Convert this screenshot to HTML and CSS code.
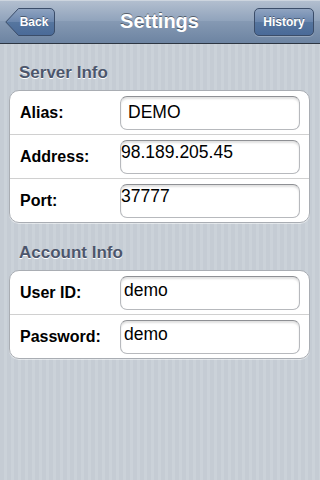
FILE: index.html
```html
<!DOCTYPE html>
<html lang="en">
<head>
  <meta charset="UTF-8">
  <title>Settings</title>
  <link rel="stylesheet" href="styles.css">
</head>
<body>
  <div class="navbar">
    <button class="nav-btn back-btn">
      <svg class="back-shape" width="50" height="28" viewBox="0 0 50 28">
        <defs>
          <linearGradient id="btnGrad" x1="0" y1="0" x2="0" y2="1">
            <stop offset="0" stop-color="#90a4c1"/>
            <stop offset="0.5" stop-color="#6a86ad"/>
            <stop offset="0.5" stop-color="#56769f"/>
            <stop offset="1" stop-color="#4a6a98"/>
          </linearGradient>
        </defs>
        <path d="M13.5 0.5 H45 A4.5 4.5 0 0 1 49.5 5 V23 A4.5 4.5 0 0 1 45 27.5 H13.5 L0.8 14 Z"
              fill="url(#btnGrad)" stroke="#3b4d69" stroke-width="1"/>
      </svg>
      <span class="btn-label">Back</span>
    </button>
    <h1 class="nav-title">Settings</h1>
    <button class="nav-btn history-btn">History</button>
  </div>

  <h2 class="section-title">Server Info</h2>
  <div class="group">
    <div class="row">
      <label for="alias">Alias:</label>
      <input type="text" id="alias" class="field field-alias" value="DEMO">
    </div>
    <div class="row">
      <label for="address">Address:</label>
      <input type="text" id="address" class="field field-top" value="98.189.205.45">
    </div>
    <div class="row">
      <label for="port">Port:</label>
      <input type="text" id="port" class="field field-top" value="37777">
    </div>
  </div>

  <h2 class="section-title">Account Info</h2>
  <div class="group">
    <div class="row">
      <label for="userId">User ID:</label>
      <input type="text" id="userId" class="field field-user" value="demo">
    </div>
    <div class="row">
      <label for="password">Password:</label>
      <input type="text" id="password" class="field field-user" value="demo">
    </div>
  </div>
</body>
</html>
```

FILE: styles.css
```css
html, body {
  height: 100%;
  margin: 0;
}
body {
  font-family: "Liberation Sans", Arial, sans-serif;
  background: repeating-linear-gradient(90deg, #c5ccd4 0, #c5ccd4 4px, #cbd2d9 4px, #cbd2d9 7px);
}
.navbar {
  height: 43px;
  border-bottom: 1px solid #2d3642;
  background: linear-gradient(#b4c0d0, #8fa2bb 50%, #8599b3 50%, #6d84a2);
  box-shadow: inset 0 1px 0 #cdd5df;
  display: grid;
  grid-template-columns: 1fr auto 1fr;
  align-items: center;
  padding: 0 6px 0 5px;
}
.nav-title {
  margin: 0;
  font-size: 20px;
  font-weight: bold;
  color: #fff;
  text-shadow: 0 -1px 0 rgba(0, 0, 0, 0.45);
}
.nav-btn {
  height: 28px;
  font-family: inherit;
  font-size: 12px;
  font-weight: bold;
  color: #fff;
  text-shadow: 0 -1px 0 rgba(0, 0, 0, 0.4);
  padding: 0;
  cursor: pointer;
}
.back-btn {
  justify-self: start;
  position: relative;
  width: 50px;
  border: none;
  background: none;
  padding-left: 12px;
  padding-right: 4px;
  text-align: center;
}
.back-shape {
  position: absolute;
  left: 0;
  top: 0;
}
.btn-label {
  position: relative;
}
.history-btn {
  justify-self: end;
  width: 60px;
  border: 1px solid #3b4d69;
  border-radius: 5px;
  background: linear-gradient(#90a4c1, #6a86ad 50%, #56769f 50%, #4a6a98);
  box-shadow: 0 1px 0 rgba(255, 255, 255, 0.25);
}
.section-title {
  margin: 0;
  padding: 19px 0 7px 19px;
  font-size: 17px;
  line-height: 20px;
  font-weight: bold;
  color: #4c566c;
  text-shadow: 0 1px 0 #fff;
}
.group {
  margin: 0 10px 1px 9px;
  background: #fff;
  border: 1px solid #a9adb3;
  border-radius: 10px;
  box-shadow: 0 1px 0 rgba(255, 255, 255, 0.5);
}
.row {
  height: 43px;
  display: flex;
  align-items: center;
  padding: 0 9px 0 10px;
}
.row + .row {
  border-top: 1px solid #d0d0d0;
}
.row label {
  flex: none;
  width: 100px;
  font-size: 16px;
  font-weight: bold;
  color: #000;
  white-space: nowrap;
}
.field {
  flex: 1;
  min-width: 0;
  width: auto;
  height: 34px;
  box-sizing: border-box;
  border: 1px solid #b7b9bd;
  border-top-color: #8e9094;
  border-radius: 7px;
  box-shadow: inset 0 2px 2px rgba(0, 0, 0, 0.12);
  background: #fff;
  font-family: inherit;
  font-size: 17.5px;
  color: #000;
  padding: 0;
  outline: none;
}
.field-alias {
  padding-left: 7px;
}
.field-top {
  padding-bottom: 9px;
}
.field-user {
  padding-left: 3px;
  padding-bottom: 4px;
}
```
